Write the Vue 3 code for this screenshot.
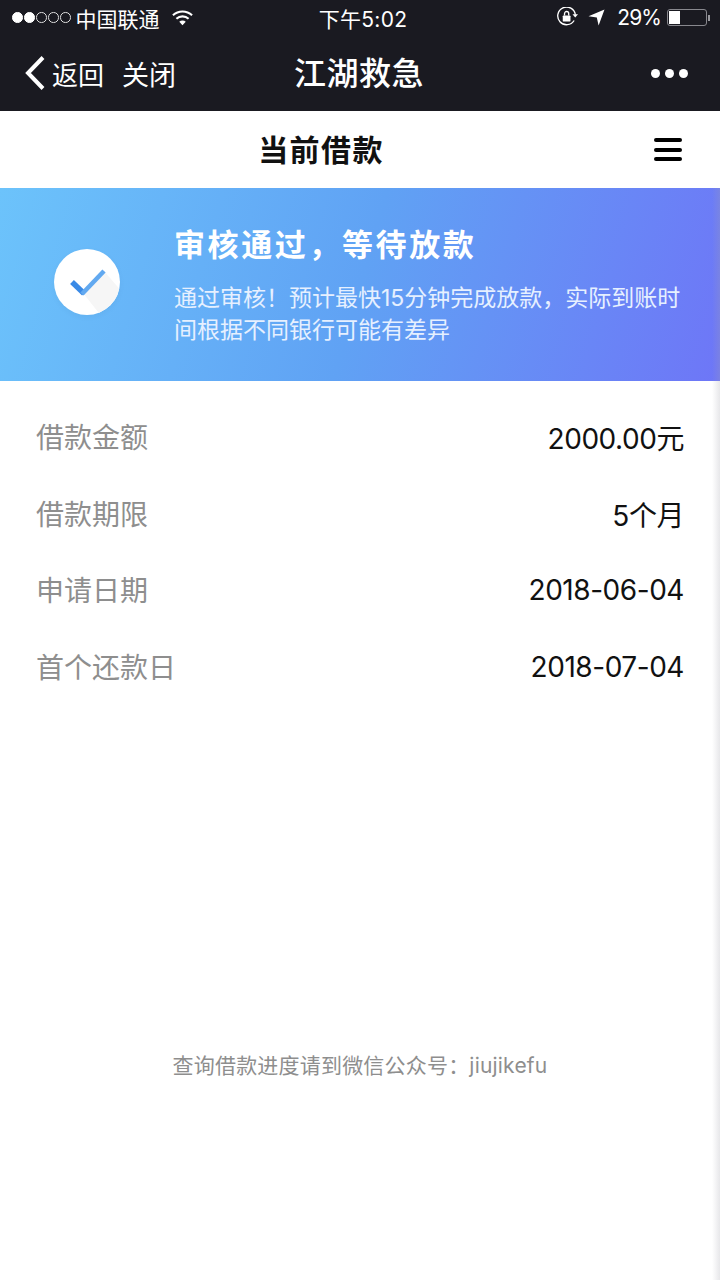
<template>
  <div class="page">
    <!-- Status bar and wechat nav -->
    <header class="topbar">
      <div class="status">
        <div class="status-left">
          <span class="signal">
            <i v-for="n in 5" :key="n" :class="{ on: n <= 2 }"></i>
          </span>
          <span>中国联通</span>
          <svg class="wifi" width="21" height="16" viewBox="0 0 22 16">
            <path d="M1 5.2a14.5 14.5 0 0 1 20 0" fill="none" stroke="#fff" stroke-width="2.2" />
            <path d="M4.6 8.8a9.4 9.4 0 0 1 12.8 0" fill="none" stroke="#fff" stroke-width="2.2" />
            <path d="M11 15.5 7.6 11.9a4.8 4.8 0 0 1 6.8 0z" fill="#fff" />
          </svg>
        </div>
        <div class="status-time">下午5:02</div>
        <div class="status-right">
          <svg width="21" height="21" viewBox="1 1 19 19">
            <path d="M16.5 13.2A8 8 0 1 1 17.6 8" fill="none" stroke="#fff" stroke-width="1.2" />
            <path d="M15 7.5h5l-2.5 3z" fill="#fff" />
            <rect x="6.2" y="8.6" width="7" height="5.6" rx="0.8" fill="#fff" />
            <path d="M7.8 8.6V7a1.9 1.9 0 0 1 3.8 0v1.6" fill="none" stroke="#fff" stroke-width="1.2" />
          </svg>
          <svg class="arrow" width="17" height="17" viewBox="0 0 17 17">
            <path d="M16.5.5 10.6 16.5 8.8 8.4.5 7.2z" fill="#fff" />
          </svg>
          <span class="pct">29%</span>
          <span class="battery"><b></b></span>
          <span class="nub"></span>
        </div>
      </div>
      <nav class="nav">
        <div class="nav-left">
          <svg class="chevron" width="22" height="36" viewBox="0 0 22 36">
            <path d="M19 2.5 4 18l15 15.5" fill="none" stroke="#fff" stroke-width="4" />
          </svg>
          <span class="back">返回</span>
          <span class="close">关闭</span>
        </div>
        <div class="nav-title">江湖救急</div>
        <div class="nav-more"><i></i><i></i><i></i></div>
      </nav>
    </header>

    <!-- Page heading -->
    <div class="heading">
      <h1>当前借款</h1>
      <div class="burger"><i></i><i></i><i></i></div>
    </div>

    <!-- Status banner -->
    <section class="banner">
      <div class="check">
        <svg width="66" height="66" viewBox="0 0 66 66">
          <path d="M29 44 50 22 70 45 48 68z" fill="#f6f6f6" />
          <path d="M18 33 30 44.5" fill="none" stroke="#3a8ae6" stroke-width="5.5" />
          <path d="M28 45 50 22" fill="none" stroke="#62a9f0" stroke-width="4.5" />
        </svg>
      </div>
      <div class="banner-text">
        <h2>审核通过，等待放款</h2>
        <p>通过审核！预计最快15分钟完成放款，实际到账时间根据不同银行可能有差异</p>
      </div>
    </section>

    <!-- Loan details -->
    <main class="details">
      <div v-for="row in rows" :key="row.label" class="row">
        <span class="label">{{ row.label }}</span>
        <span class="value">{{ row.value }}</span>
      </div>
    </main>

    <p class="hint">查询借款进度请到微信公众号：jiujikefu</p>
  </div>
</template>

<script setup>
const rows = [
  { label: "借款金额", value: "2000.00元" },
  { label: "借款期限", value: "5个月" },
  { label: "申请日期", value: "2018-06-04" },
  { label: "首个还款日", value: "2018-07-04" },
];
</script>

<style>
html, body { margin: 0; background: #fff; }
</style>

<style scoped>
.page {
  position: relative;
  width: 720px; height: 1280px; overflow: hidden; background: #fff;
  font-family: Inter, "Noto Sans CJK SC", sans-serif;
}
/* thin grey fade on the right edge, from the banner down */
.page::after {
  content: ""; position: absolute; right: 0; top: 188px; bottom: 0; width: 8px;
  background: linear-gradient(to right, rgba(160, 160, 170, 0), rgba(160, 160, 170, .25));
}
.topbar { height: 111px; background: #1a1a21; color: #fff; }
.status {
  height: 36px; padding: 0 10px 1px 12px; box-sizing: border-box; display: grid;
  grid-template-columns: 1fr auto 1fr; align-items: center; font-size: 21px;
}
.status-left { display: flex; align-items: center; gap: 5px; }
.signal { display: flex; gap: 1.5px; }
.signal i {
  width: 10.5px; height: 10.5px; border-radius: 50%;
  border: 1px solid #ddd; box-sizing: border-box;
}
.signal i.on { background: #fff; border-color: #fff; }
.wifi { margin-left: 7px; }
.status-time { font-size: 21px; letter-spacing: .3px; margin-left: 4px; }
.status-right { display: flex; align-items: center; justify-content: flex-end; }
.arrow { margin-left: 10px; }
.pct { margin-left: 12px; margin-right: 6px; font-size: 21px; letter-spacing: -.9px; }
.battery {
  width: 40px; height: 17px; box-sizing: border-box; padding: 1px;
  border: 1px solid #88888e; border-radius: 3px; display: block;
}
.battery b { display: block; width: 11px; height: 13px; background: #fff; }
.nub { width: 2px; height: 6px; background: #99999e; margin-left: 1px; }

.nav {
  height: 75px; box-sizing: border-box; display: grid; grid-template-columns: 1fr auto 1fr;
  align-items: center; padding: 0 32px 0 24px;
}
.nav-left { display: flex; align-items: center; }
.chevron { margin-bottom: 2px; }
.back { font-size: 26px; margin-left: 6px; }
.close { font-size: 27px; margin-left: 18px; }
.nav-title { font-size: 32px; font-weight: 500; margin: 0 0 6px 6px; letter-spacing: .5px; }
.nav-more { display: flex; justify-content: flex-end; gap: 5px; }
.nav-more i { width: 9px; height: 9px; border-radius: 50%; background: #fff; }

.heading {
  height: 77px; position: relative; display: flex; align-items: center; justify-content: center;
  padding-right: 78px; padding-bottom: 4px; box-sizing: border-box;
}
.heading h1 { margin: 0; font-size: 30px; font-weight: 700; color: #111; letter-spacing: 1.4px; }
.burger {
  position: absolute; right: 38px; top: 27px; width: 28px; height: 23px;
  display: flex; flex-direction: column; justify-content: space-between;
}
.burger i { height: 4px; border-radius: 2px; background: #000; }

.banner {
  height: 193px; box-sizing: border-box; padding: 0 34px 0 54px;
  display: flex; align-items: center; color: #fff;
  background: linear-gradient(106deg, #6cc3fb 0%, #60a2f4 50%, #6e76f7 100%);
}
.check {
  width: 66px; height: 66px; border-radius: 50%; background: #fff;
  overflow: hidden; flex: none; margin-right: 55px; margin-bottom: 5px;
  box-shadow: 0 2px 6px rgba(0, 0, 0, .04);
}
.check svg { display: block; }
.banner-text { flex: 1; margin-left: -1px; }
.banner-text h2 { margin: 0 0 16px; font-size: 31px; font-weight: 700; letter-spacing: 2.6px; line-height: 42px; }
.banner-text p { margin: 0; font-size: 23px; line-height: 32px; color: #e6f0ff; }

.details { padding: 17px 36px 0; }
.row {
  height: 76.6px; display: flex; align-items: center; justify-content: space-between;
}
.label { font-size: 28px; color: #8e8e8e; }
.value { font-size: 28px; color: #111; letter-spacing: -.45px; padding-top: 2px; }

.hint {
  position: absolute; left: 0; right: 0; top: 1050px; margin: 0; text-align: center;
  font-size: 21px; line-height: 32px; color: #8e8e8e; letter-spacing: .2px;
}
</style>
